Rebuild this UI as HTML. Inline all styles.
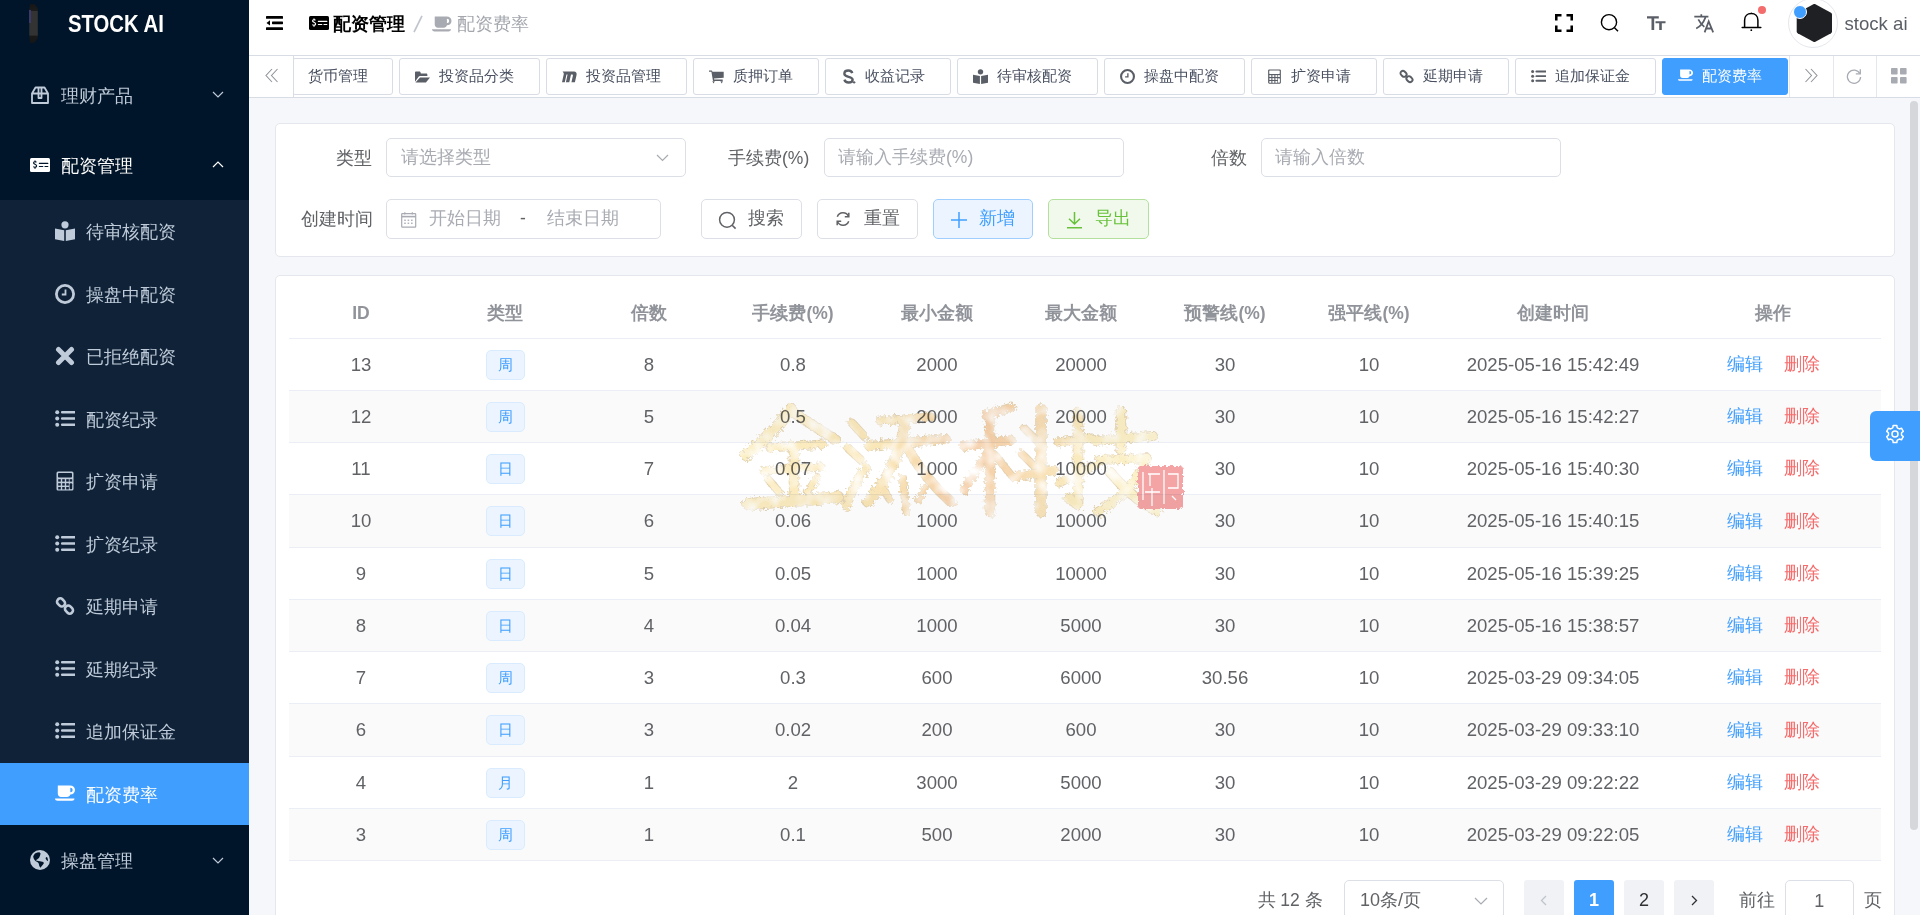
<!DOCTYPE html>
<html><head><meta charset="utf-8">
<style>
*{box-sizing:border-box;margin:0;padding:0}
html,body{width:1920px;height:915px;overflow:hidden}
body{position:relative;font-family:"Liberation Sans",sans-serif;background:#f5f7fa;color:#606266}
.a{position:absolute}
svg{display:block}
#side{left:0;top:0;width:249px;height:915px;background:#001529;overflow:hidden}
.logo-t{left:67.5px;top:8.5px;font-size:23.6px;transform-origin:0 50%;transform:scaleX(0.86);font-weight:bold;color:#fff;line-height:30px;white-space:nowrap}
.mi{left:0;width:249px;height:70px;line-height:70px;font-size:17.5px;color:#bfcbd9}
.mi .tx{position:absolute;left:61px;top:1px}
.sub{left:0;top:200px;width:249px;height:625px;background:#0f2238}
.si{left:0;width:249px;height:62.5px;line-height:62.5px;font-size:17.5px;color:#bfcbd9}
.si .tx{position:absolute;left:86px;top:1px}
.si svg{left:55px;top:21px}
.si.act{background:#409eff;color:#fff}
#hdr{left:249px;top:0;width:1671px;height:55px;background:#fff}
#tabs{left:249px;top:55px;width:1671px;height:43px;background:#fff;border-top:1px solid #d8dce5;border-bottom:1px solid #d8dce5}
.tab{top:58px;height:36.5px;border:1px solid #d8dce5;border-radius:3px;background:#fff;font-size:15px;line-height:34.5px;color:#495060;white-space:nowrap}
.tab .tx{position:absolute;top:0}
.tab svg{top:10px}
.tab.act{background:#409eff;border-color:#409eff;color:#fff}
.card{background:#fff;border:1px solid #e4e7ed;border-radius:5px}
.lbl{font-size:17.5px;color:#606266;line-height:40px;height:40px;white-space:nowrap}
.inp{height:39.5px;border:1px solid #dcdfe6;border-radius:5px;background:#fff;font-size:17.5px;line-height:37.5px;color:#a8abb2;white-space:nowrap}
.btn{height:39.5px;border:1px solid #dcdfe6;border-radius:5px;background:#fff;font-size:17.5px;line-height:37.5px;color:#606266;white-space:nowrap}
.th{position:absolute;top:288px;height:50px;font-size:17.5px;font-weight:bold;color:#909399;text-align:center;line-height:50px;white-space:nowrap}
.row{position:absolute;left:289px;width:1592px}
.row.str{background:#fafafa}
.c{position:absolute;top:0;text-align:center;font-size:18.6px;color:#606266;white-space:nowrap}
.tag{position:absolute;width:39px;height:30px;background:#ecf5ff;border:1px solid #d9ecff;border-radius:5px;color:#409eff;font-size:15px;line-height:27px;text-align:center}
.lk{position:absolute;font-size:17.5px;white-space:nowrap}
.pg{position:absolute;top:880px;width:40px;height:40px;background:#f0f2f5;border-radius:3px;text-align:center;line-height:40px;font-size:18px;color:#303133}
</style></head><body>
<div id="side" class="a">
<div class="a" style="left:29.3px;top:3.8px;width:8.5px;height:39px;background:linear-gradient(#161616 0,#1c1c1c 18%,#333334 19%,#333334 80%,#1a1a1a 82%,#161616 100%);clip-path:polygon(10% 0,60% 0,100% 12%,100% 88%,60% 100%,10% 100%,0 80%,0 15%)"></div><div class="a" style="left:29.3px;top:10px;width:1.5px;height:13px;background:#3a3a6a"></div>
<div class="a logo-t">STOCK AI</div>
<div class="a mi" style="top:60px"><span class="tx">理财产品</span></div>
<div class="a mi" style="top:130px;color:#fff"><span class="tx">配资管理</span></div>
<div class="a sub"></div>
<div class="a si" style="top:200.0px"><svg class="a" style="left:55px;top:21px" width="20" height="20" viewBox="0 0 20 20"><circle cx="10" cy="3.8" r="3.6" fill="#c0cbd9"/><path d="M0 7.6 L9.2 9.2 V20 L0 18.2 Z M20 7.6 L10.8 9.2 V20 L20 18.2 Z" fill="#c0cbd9"/></svg><span class="tx">待审核配资</span></div>
<div class="a si" style="top:262.5px"><svg class="a" style="left:55px;top:21px" width="20" height="20" viewBox="0 0 20 20"><circle cx="10" cy="10" r="8.6" stroke="#c0cbd9" stroke-width="2.8" fill="none"/><path d="M10.5 5.5 V10.5 H6.8" stroke="#c0cbd9" stroke-width="1.8" fill="none"/></svg><span class="tx">操盘中配资</span></div>
<div class="a si" style="top:325.0px"><svg class="a" style="left:55px;top:21px" width="20" height="20" viewBox="0 0 20 20"><path d="M3.5 3.5 L16.5 16.5 M16.5 3.5 L3.5 16.5" stroke="#c0cbd9" stroke-width="5" stroke-linecap="round"/></svg><span class="tx">已拒绝配资</span></div>
<div class="a si" style="top:387.5px"><svg class="a" style="left:55px;top:21px" width="20" height="20" viewBox="0 0 20 20"><circle cx="2.2" cy="3.3" r="2" fill="#c0cbd9"/><circle cx="2.2" cy="9.5" r="2" fill="#c0cbd9"/><circle cx="2.2" cy="15.7" r="2" fill="#c0cbd9"/><path d="M7.2 3.3 H19.8 M7.2 9.5 H19.8 M7.2 15.7 H19.8" stroke="#c0cbd9" stroke-width="2.6" stroke-linecap="round"/></svg><span class="tx">配资纪录</span></div>
<div class="a si" style="top:450.0px"><svg class="a" style="left:55px;top:21px" width="20" height="20" viewBox="0 0 20 20"><rect x="1.5" y="0.5" width="17" height="19" rx="1.5" fill="#c0cbd9"/><rect x="3" y="2" width="14" height="4.5" rx="0.8" fill="#0f2238"/><g fill="#0f2238"><rect x="3.2" y="8.2" width="2.6" height="2.4"/><rect x="7.2" y="8.2" width="2.6" height="2.4"/><rect x="11.2" y="8.2" width="2.6" height="2.4"/><rect x="14.6" y="8.2" width="2.6" height="2.4"/><rect x="3.2" y="12.2" width="2.6" height="2.4"/><rect x="7.2" y="12.2" width="2.6" height="2.4"/><rect x="11.2" y="12.2" width="2.6" height="2.4"/><rect x="14.6" y="12.2" width="2.6" height="6" rx="1"/><rect x="3.2" y="16" width="2.6" height="2.4"/><rect x="7.2" y="16" width="2.6" height="2.4"/><rect x="11.2" y="16" width="2.6" height="2.4"/></g></svg><span class="tx">扩资申请</span></div>
<div class="a si" style="top:512.5px"><svg class="a" style="left:55px;top:21px" width="20" height="20" viewBox="0 0 20 20"><circle cx="2.2" cy="3.3" r="2" fill="#c0cbd9"/><circle cx="2.2" cy="9.5" r="2" fill="#c0cbd9"/><circle cx="2.2" cy="15.7" r="2" fill="#c0cbd9"/><path d="M7.2 3.3 H19.8 M7.2 9.5 H19.8 M7.2 15.7 H19.8" stroke="#c0cbd9" stroke-width="2.6" stroke-linecap="round"/></svg><span class="tx">扩资纪录</span></div>
<div class="a si" style="top:575.0px"><svg class="a" style="left:55px;top:21px" width="20" height="20" viewBox="0 0 20 20"><g stroke="#c0cbd9" stroke-width="2.6" fill="none"><rect x="1.8" y="3.2" width="8.5" height="6.4" rx="3" transform="rotate(45 6 6.4)"/><rect x="9.7" y="10.4" width="8.5" height="6.4" rx="3" transform="rotate(45 14 13.6)"/></g></svg><span class="tx">延期申请</span></div>
<div class="a si" style="top:637.5px"><svg class="a" style="left:55px;top:21px" width="20" height="20" viewBox="0 0 20 20"><circle cx="2.2" cy="3.3" r="2" fill="#c0cbd9"/><circle cx="2.2" cy="9.5" r="2" fill="#c0cbd9"/><circle cx="2.2" cy="15.7" r="2" fill="#c0cbd9"/><path d="M7.2 3.3 H19.8 M7.2 9.5 H19.8 M7.2 15.7 H19.8" stroke="#c0cbd9" stroke-width="2.6" stroke-linecap="round"/></svg><span class="tx">延期纪录</span></div>
<div class="a si" style="top:700.0px"><svg class="a" style="left:55px;top:21px" width="20" height="20" viewBox="0 0 20 20"><circle cx="2.2" cy="3.3" r="2" fill="#c0cbd9"/><circle cx="2.2" cy="9.5" r="2" fill="#c0cbd9"/><circle cx="2.2" cy="15.7" r="2" fill="#c0cbd9"/><path d="M7.2 3.3 H19.8 M7.2 9.5 H19.8 M7.2 15.7 H19.8" stroke="#c0cbd9" stroke-width="2.6" stroke-linecap="round"/></svg><span class="tx">追加保证金</span></div>
<div class="a si act" style="top:762.5px"><svg class="a" style="left:55px;top:22.5px" width="20" height="20" viewBox="0 0 20 20"><path d="M2.8 0.6 H15 C18 0.6 20 2.5 20 5 C20 7.7 18 9.5 15.3 9.5 C15 11 13.6 12 12 12 H6 C4.2 12 2.8 10.6 2.8 8.8 Z M15.3 2.8 V7.3 C16.7 7.3 17.6 6.3 17.6 5 C17.6 3.7 16.7 2.8 15.3 2.8 Z" fill="#fff" fill-rule="evenodd"/><path d="M0 13.5 H19.5 C19.5 14.8 18.3 15.8 17 15.8 H2.5 C1.2 15.8 0 14.8 0 13.5 Z" fill="#fff"/></svg><span class="tx">配资费率</span></div>
<div class="a mi" style="top:825px"><span class="tx">操盘管理</span></div>
<svg class="a" style="left:31px;top:86px" width="18" height="18" viewBox="0 0 18 18" fill="none" stroke="#c0cbd9" stroke-width="1.8" stroke-linejoin="round"><path d="M1 7.5 L4.5 1.5 H13.5 L17 7.5 V17 H1 Z M1 7.5 H17 M7.5 1.5 V12 H10.5 V1.5"/></svg>
<svg class="a" style="left:30px;top:158px" width="20" height="14" viewBox="0 0 20 14"><rect x="0" y="0" width="20" height="14" rx="1.5" fill="#fff"/><path d="M6.4 4.3 C5.6 3.4 3.6 3.5 3.6 4.9 C3.6 6.4 6.6 6.1 6.6 7.9 C6.6 9.4 4.4 9.6 3.3 8.6 M5 2.6 V3.6 M5 9.6 V10.8" stroke="#001529" stroke-width="1.2" fill="none"/><path d="M9.4 5.4 H17.8 M9.4 8.5 H12.8 M15 8.5 H17.8" stroke="#001529" stroke-width="1.2" stroke-linecap="round"/></svg>
<svg class="a" style="left:212px;top:91px" width="12" height="7" viewBox="0 0 12 7"><path d="M1 1 L6 6 L11 1" stroke="#c0cbd9" stroke-width="1.2" fill="none"/></svg>
<svg class="a" style="left:212px;top:161px" width="12" height="7" viewBox="0 0 12 7"><path d="M1 6 L6 1 L11 6" stroke="#fff" stroke-width="1.2" fill="none"/></svg>
<svg class="a" style="left:212px;top:857px" width="12" height="7" viewBox="0 0 12 7"><path d="M1 1 L6 6 L11 1" stroke="#c0cbd9" stroke-width="1.2" fill="none"/></svg>
<svg class="a" style="left:30px;top:850px" width="20" height="20" viewBox="0 0 20 20"><circle cx="10" cy="10" r="10" fill="#c0cbd9"/><path d="M3.2 6.5 C3.8 5 4.5 4 5 3.5 C6.5 2.6 8 2.2 9.4 2.2 L10.6 3.6 L10 5.8 L9 8.1 C8.2 8.8 7.6 9.2 7.1 9.4 C6.3 9.6 5.9 10 6.2 10.6 C7.5 11 9 11.2 10 11.3 L13.4 12 L13.8 13.4 L11.6 16.3 L10.4 17.8 L9.3 16 L8.7 13.4 C8 12.2 6.5 11.5 5.5 11 C4.2 9.8 3.4 8.2 3.2 6.5 Z M16 7 L17.4 7.4 L18.1 10.5 L17.3 10.9 L15.6 8.8 Z" fill="#001529"/></svg>
</div>
<div id="hdr" class="a"></div>
<div id="tabs" class="a"></div>
<svg class="a" style="left:266px;top:16px" width="17" height="14" viewBox="0 0 17 14"><rect x="0" y="0" width="17" height="2.8" rx="0.6" fill="#000"/><rect x="6" y="5.6" width="11" height="2.6" rx="0.6" fill="#000"/><path d="M0.5 6.9 L4 4.3 V9.5 Z" fill="#000"/><rect x="0" y="11.2" width="17" height="2.8" rx="0.6" fill="#000"/></svg>
<svg class="a" style="left:309px;top:16px" width="20" height="14" viewBox="0 0 20 14"><rect x="0" y="0" width="20" height="14" rx="1.5" fill="#000"/><path d="M6.4 4.3 C5.6 3.4 3.6 3.5 3.6 4.9 C3.6 6.4 6.6 6.1 6.6 7.9 C6.6 9.4 4.4 9.6 3.3 8.6 M5 2.6 V3.6 M5 9.6 V10.8" stroke="#fff" stroke-width="1.2" fill="none"/><path d="M9.4 5.4 H17.8 M9.4 8.5 H12.8 M15 8.5 H17.8" stroke="#fff" stroke-width="1.2" stroke-linecap="round"/></svg>
<div class="a" style="left:332.5px;top:9px;font-size:17.5px;line-height:30px;font-weight:bold;color:#000;white-space:nowrap">配资管理</div>
<svg class="a" style="left:412px;top:15px" width="12" height="18" viewBox="0 0 12 18"><path d="M2 17.2 L10 0.8" stroke="#c0c4cc" stroke-width="1.7"/></svg>
<svg class="a" style="left:432px;top:15.5px" width="19.5" height="19.5" viewBox="0 0 20 20"><path d="M2.8 0.6 H15 C18 0.6 20 2.5 20 5 C20 7.7 18 9.5 15.3 9.5 C15 11 13.6 12 12 12 H6 C4.2 12 2.8 10.6 2.8 8.8 Z M15.3 2.8 V7.3 C16.7 7.3 17.6 6.3 17.6 5 C17.6 3.7 16.7 2.8 15.3 2.8 Z" fill="#a8abb2" fill-rule="evenodd"/><path d="M0 13.5 H19.5 C19.5 14.8 18.3 15.8 17 15.8 H2.5 C1.2 15.8 0 14.8 0 13.5 Z" fill="#a8abb2"/></svg>
<div class="a" style="left:456.5px;top:9px;font-size:17.5px;line-height:30px;color:#a3a6ad;white-space:nowrap">配资费率</div>
<svg class="a" style="left:1555px;top:14px" width="18" height="18" viewBox="0 0 18 18"><path d="M1.25 6.5 V1.25 H6.5 M11.5 1.25 H16.75 V6.5 M16.75 11.5 V16.75 H11.5 M6.5 16.75 H1.25 V11.5" stroke="#000" stroke-width="2.6" fill="none"/></svg>
<svg class="a" style="left:1600px;top:13px" width="20" height="20" viewBox="0 0 20 20"><circle cx="9" cy="9.2" r="7.6" stroke="#000" stroke-width="1.4" fill="none"/><path d="M14.5 14.8 L18 18.2" stroke="#000" stroke-width="1.5"/></svg>
<svg class="a" style="left:1647px;top:15px" width="19" height="16" viewBox="0 0 19 16"><path d="M0 1.2 H11.8 V3.4 H7.2 V15 H4.5 V3.4 H0 Z M8.5 6.2 H18.5 V8.2 H14.8 V15 H12.2 V8.2 H8.5 Z" fill="#5a5e66"/></svg>
<svg class="a" style="left:1694px;top:14px" width="20" height="19" viewBox="0 0 20 19"><path d="M0.3 2.7 H14.4 M7.3 0.3 V2.7 M11.5 3.4 C9.5 8.5 6.5 12.5 2.2 14.5 M4.3 5.3 C6 8.6 8 11 10.3 12.8" stroke="#5a5e66" stroke-width="1.7" fill="none"/><path d="M10.6 18.4 L14.7 7.4 L19.2 18.4 M12.1 14.5 H17.6" stroke="#5a5e66" stroke-width="1.8" fill="none" stroke-linejoin="miter"/></svg>
<svg class="a" style="left:1741px;top:11px" width="21" height="21" viewBox="0 0 21 21"><path d="M3.6 16.6 V9.2 C3.6 5.2 6.5 2.6 10.3 2.6 C14.1 2.6 16.9 5.2 16.9 9.2 V16.6" stroke="#000" stroke-width="1.5" fill="none"/><path d="M1.2 16.6 H19.8" stroke="#000" stroke-width="1.5" stroke-linecap="round"/><path d="M9.3 2.6 L10.3 1.4 L11.3 2.6 Z" fill="#000"/><circle cx="10.3" cy="19.2" r="0.9" fill="#000"/></svg>
<div class="a" style="left:1758px;top:6px;width:8px;height:8px;border-radius:50%;background:#f56c6c"></div>
<div class="a" style="left:1788px;top:-2.5px;width:50px;height:50px;border-radius:50%;border:1px solid #e4e7ed;background:#fff"></div>
<svg class="a" style="left:1796px;top:3px" width="37" height="40" viewBox="0 0 37 40"><path d="M17.4 1.3 C18 1 18.8 1 19.4 1.3 L35 9.8 C35.7 10.2 36 10.8 36 11.6 V28.4 C36 29.2 35.7 29.8 35 30.2 L19.4 38.7 C18.8 39 18 39 17.4 38.7 L1.7 30.2 C1 29.8 0.7 29.2 0.7 28.4 V11.6 C0.7 10.8 1 10.2 1.7 9.8 Z" fill="#1f2023"/></svg>
<div class="a" style="left:1793px;top:5px;width:14px;height:14px;border-radius:50%;background:#409eff;border:1.5px solid #fff"></div>
<div class="a" style="left:1844.5px;top:8.5px;font-size:18.6px;line-height:30px;color:#5a5e66;white-space:nowrap">stock ai</div>
<div class="a" style="left:292.5px;top:56px;width:1px;height:41px;background:#d8dce5"></div>
<svg class="a" style="left:265px;top:68px" width="14" height="15" viewBox="0 0 14 15"><path d="M7 1 L1 7.5 L7 14 M12.5 1 L6.5 7.5 L12.5 14" stroke="#909399" stroke-width="1.1" fill="none"/></svg>
<div class="a" style="left:293.5px;top:56px;width:1496px;height:41px;overflow:hidden">
<div class="a tab" style="left:-1.50px;top:2px;width:101.20px"><span class="tx" style="left:15px">货币管理</span></div>
<div class="a tab" style="left:105.20px;top:2px;width:141.50px"><svg class="a" style="left:15px;top:9.5px" width="15" height="15" viewBox="0 0 20 20"><path d="M0 4.6 C0 3.8 .6 3.2 1.4 3.2 H6 C6.9 3.2 7.4 3.8 7.8 5.9 H15 C15.9 5.9 16.5 6.6 16.5 7.5 V9.4 H6.8 C5.8 9.4 5 9.9 4.5 10.7 L0 17 Z M6.7 11.4 H20 L14.6 17.9 H0.6 Z" fill="#5a5e66"/></svg><span class="tx" style="left:39.7px">投资品分类</span></div>
<div class="a tab" style="left:252.20px;top:2px;width:141.50px"><svg class="a" style="left:15px;top:9.5px" width="15" height="15" viewBox="0 0 20 20"><path d="M0.8 3.3 H16 C18.6 3.3 20 5.2 19.4 8 L17.2 17.6 H12.6 L14.5 9 C14.7 8 14.3 7.4 13.4 7.4 H12 L9.7 17.6 H5.2 L7.4 7.4 H6 L3.7 17.6 H0 L2.4 6.5 C2.5 5.6 1.8 4.6 0.8 3.3 Z" fill="#5a5e66"/></svg><span class="tx" style="left:39.7px">投资品管理</span></div>
<div class="a tab" style="left:399.20px;top:2px;width:126.50px"><svg class="a" style="left:15px;top:9.5px" width="15" height="15" viewBox="0 0 20 20"><path d="M0 2 H3 C3.8 2 4.4 2.5 4.6 3.6 H19.6 V11.6 L6.6 12.8 L6.9 14.1 H18.3 V16.1 H6.2 C5.4 16.1 5.2 15.5 5.1 14.8 L3.2 3.6 H0 Z" fill="#5a5e66"/><path d="M4.4 16.2 H7.8 L6.1 19.4 Z M15.2 16.2 H18.6 L16.9 19.4 Z" fill="#5a5e66"/></svg><span class="tx" style="left:39.7px">质押订单</span></div>
<div class="a tab" style="left:531.20px;top:2px;width:126.50px"><svg class="a" style="left:15px;top:9.5px" width="15" height="15" viewBox="0 0 20 20"><path d="M15 5.5 C14.5 3.2 12.5 2 9.8 2 C6.5 2 4.5 3.8 4.5 6.2 C4.5 11.5 15.5 9.5 15.5 14.2 C15.5 16.5 13.3 18 10.2 18 C7 18 5.2 16.6 4.6 14.2" stroke="#5a5e66" stroke-width="3.2" fill="none"/><path d="M10 0 V20" stroke="#5a5e66" stroke-width="0" /><circle cx="17.5" cy="17.8" r="1.6" fill="#5a5e66"/></svg><span class="tx" style="left:39.7px">收益记录</span></div>
<div class="a tab" style="left:663.20px;top:2px;width:141.50px"><svg class="a" style="left:15px;top:9.5px" width="15" height="15" viewBox="0 0 20 20"><circle cx="10" cy="3.8" r="3.6" fill="#5a5e66"/><path d="M0 7.6 L9.2 9.2 V20 L0 18.2 Z M20 7.6 L10.8 9.2 V20 L20 18.2 Z" fill="#5a5e66"/></svg><span class="tx" style="left:39.7px">待审核配资</span></div>
<div class="a tab" style="left:810.20px;top:2px;width:141.50px"><svg class="a" style="left:15px;top:9.5px" width="15" height="15" viewBox="0 0 20 20"><circle cx="10" cy="10" r="8.6" stroke="#5a5e66" stroke-width="2.8" fill="none"/><path d="M10.5 5.5 V10.5 H6.8" stroke="#5a5e66" stroke-width="1.8" fill="none"/></svg><span class="tx" style="left:39.7px">操盘中配资</span></div>
<div class="a tab" style="left:957.20px;top:2px;width:126.50px"><svg class="a" style="left:15px;top:9.5px" width="15" height="15" viewBox="0 0 20 20"><rect x="1.5" y="0.5" width="17" height="19" rx="1.5" fill="#5a5e66"/><rect x="3" y="2" width="14" height="4.5" rx="0.8" fill="#fff"/><g fill="#fff"><rect x="3.2" y="8.2" width="2.6" height="2.4"/><rect x="7.2" y="8.2" width="2.6" height="2.4"/><rect x="11.2" y="8.2" width="2.6" height="2.4"/><rect x="14.6" y="8.2" width="2.6" height="2.4"/><rect x="3.2" y="12.2" width="2.6" height="2.4"/><rect x="7.2" y="12.2" width="2.6" height="2.4"/><rect x="11.2" y="12.2" width="2.6" height="2.4"/><rect x="14.6" y="12.2" width="2.6" height="6" rx="1"/><rect x="3.2" y="16" width="2.6" height="2.4"/><rect x="7.2" y="16" width="2.6" height="2.4"/><rect x="11.2" y="16" width="2.6" height="2.4"/></g></svg><span class="tx" style="left:39.7px">扩资申请</span></div>
<div class="a tab" style="left:1089.20px;top:2px;width:126.50px"><svg class="a" style="left:15px;top:9.5px" width="15" height="15" viewBox="0 0 20 20"><g stroke="#5a5e66" stroke-width="2.6" fill="none"><rect x="1.8" y="3.2" width="8.5" height="6.4" rx="3" transform="rotate(45 6 6.4)"/><rect x="9.7" y="10.4" width="8.5" height="6.4" rx="3" transform="rotate(45 14 13.6)"/></g></svg><span class="tx" style="left:39.7px">延期申请</span></div>
<div class="a tab" style="left:1221.20px;top:2px;width:141.50px"><svg class="a" style="left:15px;top:9.5px" width="15" height="15" viewBox="0 0 20 20"><circle cx="2.2" cy="3.3" r="2" fill="#5a5e66"/><circle cx="2.2" cy="9.5" r="2" fill="#5a5e66"/><circle cx="2.2" cy="15.7" r="2" fill="#5a5e66"/><path d="M7.2 3.3 H19.8 M7.2 9.5 H19.8 M7.2 15.7 H19.8" stroke="#5a5e66" stroke-width="2.6" stroke-linecap="round"/></svg><span class="tx" style="left:39.7px">追加保证金</span></div>
<div class="a tab act" style="left:1368.20px;top:2px;width:126.50px"><svg class="a" style="left:15px;top:9.5px" width="15" height="15" viewBox="0 0 20 20"><path d="M2.8 0.6 H15 C18 0.6 20 2.5 20 5 C20 7.7 18 9.5 15.3 9.5 C15 11 13.6 12 12 12 H6 C4.2 12 2.8 10.6 2.8 8.8 Z M15.3 2.8 V7.3 C16.7 7.3 17.6 6.3 17.6 5 C17.6 3.7 16.7 2.8 15.3 2.8 Z" fill="#fff" fill-rule="evenodd"/><path d="M0 13.5 H19.5 C19.5 14.8 18.3 15.8 17 15.8 H2.5 C1.2 15.8 0 14.8 0 13.5 Z" fill="#fff"/></svg><span class="tx" style="left:39.7px">配资费率</span></div>
</div>
<div class="a" style="left:1789px;top:56px;width:1px;height:41px;background:#e4e7ed"></div>
<div class="a" style="left:1833px;top:56px;width:1px;height:41px;background:#e4e7ed"></div>
<div class="a" style="left:1876px;top:56px;width:1px;height:41px;background:#e4e7ed"></div>
<svg class="a" style="left:1804px;top:68px" width="14" height="15" viewBox="0 0 14 15"><path d="M1.5 1 L7.5 7.5 L1.5 14 M7 1 L13 7.5 L7 14" stroke="#909399" stroke-width="1.1" fill="none"/></svg>
<svg class="a" style="left:1846px;top:68px" width="16" height="16" viewBox="0 0 16 16"><path d="M13.8 5.5 A6.6 6.6 0 1 0 14.6 9" stroke="#a8abb2" stroke-width="1.3" fill="none"/><path d="M14.3 1.2 V5.8 H9.8" stroke="#a8abb2" stroke-width="1.3" fill="none"/></svg>
<svg class="a" style="left:1890.5px;top:67.8px" width="16" height="16" viewBox="0 0 16 16"><g fill="#a8abb2"><rect x="0" y="0" width="6.6" height="6.6" rx="0.8"/><rect x="9" y="0" width="6.6" height="6.6" rx="0.8"/><rect x="0" y="9" width="6.6" height="6.6" rx="0.8"/><rect x="9" y="9" width="6.6" height="6.6" rx="0.8"/></g></svg>
<div class="a card" style="left:275px;top:123px;width:1620px;height:134px"></div>
<div class="a card" style="left:275px;top:275px;width:1620px;height:700px"></div>
<div class="th" style="left:289px;width:144px">ID</div>
<div class="th" style="left:433px;width:144px">类型</div>
<div class="th" style="left:577px;width:144px">倍数</div>
<div class="th" style="left:721px;width:144px">手续费(%)</div>
<div class="th" style="left:865px;width:144px">最小金额</div>
<div class="th" style="left:1009px;width:144px">最大金额</div>
<div class="th" style="left:1153px;width:144px">预警线(%)</div>
<div class="th" style="left:1297px;width:144px">强平线(%)</div>
<div class="th" style="left:1441px;width:224px">创建时间</div>
<div class="th" style="left:1665px;width:216px">操作</div>
<div class="row" style="top:339px;height:51px">
<div class="c" style="left:0px;width:144px;line-height:51px">13</div>
<div class="tag" style="left:197px;top:10.8px;line-height:28px">周</div>
<div class="c" style="left:288px;width:144px;line-height:51px">8</div>
<div class="c" style="left:432px;width:144px;line-height:51px">0.8</div>
<div class="c" style="left:576px;width:144px;line-height:51px">2000</div>
<div class="c" style="left:720px;width:144px;line-height:51px">20000</div>
<div class="c" style="left:864px;width:144px;line-height:51px">30</div>
<div class="c" style="left:1008px;width:144px;line-height:51px">10</div>
<div class="c" style="left:1152px;width:224px;line-height:51px">2025-05-16 15:42:49</div>
<div class="lk" style="left:1437.5px;top:0;line-height:51px;color:#409eff">编辑</div>
<div class="lk" style="left:1494.5px;top:0;line-height:51px;color:#f56c6c">删除</div>
</div>
<div class="row str" style="top:391px;height:51px">
<div class="c" style="left:0px;width:144px;line-height:51px">12</div>
<div class="tag" style="left:197px;top:10.8px;line-height:28px">周</div>
<div class="c" style="left:288px;width:144px;line-height:51px">5</div>
<div class="c" style="left:432px;width:144px;line-height:51px">0.5</div>
<div class="c" style="left:576px;width:144px;line-height:51px">2000</div>
<div class="c" style="left:720px;width:144px;line-height:51px">20000</div>
<div class="c" style="left:864px;width:144px;line-height:51px">30</div>
<div class="c" style="left:1008px;width:144px;line-height:51px">10</div>
<div class="c" style="left:1152px;width:224px;line-height:51px">2025-05-16 15:42:27</div>
<div class="lk" style="left:1437.5px;top:0;line-height:51px;color:#409eff">编辑</div>
<div class="lk" style="left:1494.5px;top:0;line-height:51px;color:#f56c6c">删除</div>
</div>
<div class="row" style="top:443px;height:51px">
<div class="c" style="left:0px;width:144px;line-height:51px">11</div>
<div class="tag" style="left:197px;top:10.8px;line-height:28px">日</div>
<div class="c" style="left:288px;width:144px;line-height:51px">7</div>
<div class="c" style="left:432px;width:144px;line-height:51px">0.07</div>
<div class="c" style="left:576px;width:144px;line-height:51px">1000</div>
<div class="c" style="left:720px;width:144px;line-height:51px">10000</div>
<div class="c" style="left:864px;width:144px;line-height:51px">30</div>
<div class="c" style="left:1008px;width:144px;line-height:51px">10</div>
<div class="c" style="left:1152px;width:224px;line-height:51px">2025-05-16 15:40:30</div>
<div class="lk" style="left:1437.5px;top:0;line-height:51px;color:#409eff">编辑</div>
<div class="lk" style="left:1494.5px;top:0;line-height:51px;color:#f56c6c">删除</div>
</div>
<div class="row str" style="top:495px;height:52px">
<div class="c" style="left:0px;width:144px;line-height:52px">10</div>
<div class="tag" style="left:197px;top:11.3px;line-height:28px">日</div>
<div class="c" style="left:288px;width:144px;line-height:52px">6</div>
<div class="c" style="left:432px;width:144px;line-height:52px">0.06</div>
<div class="c" style="left:576px;width:144px;line-height:52px">1000</div>
<div class="c" style="left:720px;width:144px;line-height:52px">10000</div>
<div class="c" style="left:864px;width:144px;line-height:52px">30</div>
<div class="c" style="left:1008px;width:144px;line-height:52px">10</div>
<div class="c" style="left:1152px;width:224px;line-height:52px">2025-05-16 15:40:15</div>
<div class="lk" style="left:1437.5px;top:0;line-height:52px;color:#409eff">编辑</div>
<div class="lk" style="left:1494.5px;top:0;line-height:52px;color:#f56c6c">删除</div>
</div>
<div class="row" style="top:548px;height:51px">
<div class="c" style="left:0px;width:144px;line-height:51px">9</div>
<div class="tag" style="left:197px;top:10.8px;line-height:28px">日</div>
<div class="c" style="left:288px;width:144px;line-height:51px">5</div>
<div class="c" style="left:432px;width:144px;line-height:51px">0.05</div>
<div class="c" style="left:576px;width:144px;line-height:51px">1000</div>
<div class="c" style="left:720px;width:144px;line-height:51px">10000</div>
<div class="c" style="left:864px;width:144px;line-height:51px">30</div>
<div class="c" style="left:1008px;width:144px;line-height:51px">10</div>
<div class="c" style="left:1152px;width:224px;line-height:51px">2025-05-16 15:39:25</div>
<div class="lk" style="left:1437.5px;top:0;line-height:51px;color:#409eff">编辑</div>
<div class="lk" style="left:1494.5px;top:0;line-height:51px;color:#f56c6c">删除</div>
</div>
<div class="row str" style="top:600px;height:51px">
<div class="c" style="left:0px;width:144px;line-height:51px">8</div>
<div class="tag" style="left:197px;top:10.8px;line-height:28px">日</div>
<div class="c" style="left:288px;width:144px;line-height:51px">4</div>
<div class="c" style="left:432px;width:144px;line-height:51px">0.04</div>
<div class="c" style="left:576px;width:144px;line-height:51px">1000</div>
<div class="c" style="left:720px;width:144px;line-height:51px">5000</div>
<div class="c" style="left:864px;width:144px;line-height:51px">30</div>
<div class="c" style="left:1008px;width:144px;line-height:51px">10</div>
<div class="c" style="left:1152px;width:224px;line-height:51px">2025-05-16 15:38:57</div>
<div class="lk" style="left:1437.5px;top:0;line-height:51px;color:#409eff">编辑</div>
<div class="lk" style="left:1494.5px;top:0;line-height:51px;color:#f56c6c">删除</div>
</div>
<div class="row" style="top:652px;height:51px">
<div class="c" style="left:0px;width:144px;line-height:51px">7</div>
<div class="tag" style="left:197px;top:10.8px;line-height:28px">周</div>
<div class="c" style="left:288px;width:144px;line-height:51px">3</div>
<div class="c" style="left:432px;width:144px;line-height:51px">0.3</div>
<div class="c" style="left:576px;width:144px;line-height:51px">600</div>
<div class="c" style="left:720px;width:144px;line-height:51px">6000</div>
<div class="c" style="left:864px;width:144px;line-height:51px">30.56</div>
<div class="c" style="left:1008px;width:144px;line-height:51px">10</div>
<div class="c" style="left:1152px;width:224px;line-height:51px">2025-03-29 09:34:05</div>
<div class="lk" style="left:1437.5px;top:0;line-height:51px;color:#409eff">编辑</div>
<div class="lk" style="left:1494.5px;top:0;line-height:51px;color:#f56c6c">删除</div>
</div>
<div class="row str" style="top:704px;height:52px">
<div class="c" style="left:0px;width:144px;line-height:52px">6</div>
<div class="tag" style="left:197px;top:11.3px;line-height:28px">日</div>
<div class="c" style="left:288px;width:144px;line-height:52px">3</div>
<div class="c" style="left:432px;width:144px;line-height:52px">0.02</div>
<div class="c" style="left:576px;width:144px;line-height:52px">200</div>
<div class="c" style="left:720px;width:144px;line-height:52px">600</div>
<div class="c" style="left:864px;width:144px;line-height:52px">30</div>
<div class="c" style="left:1008px;width:144px;line-height:52px">10</div>
<div class="c" style="left:1152px;width:224px;line-height:52px">2025-03-29 09:33:10</div>
<div class="lk" style="left:1437.5px;top:0;line-height:52px;color:#409eff">编辑</div>
<div class="lk" style="left:1494.5px;top:0;line-height:52px;color:#f56c6c">删除</div>
</div>
<div class="row" style="top:757px;height:51px">
<div class="c" style="left:0px;width:144px;line-height:51px">4</div>
<div class="tag" style="left:197px;top:10.8px;line-height:28px">月</div>
<div class="c" style="left:288px;width:144px;line-height:51px">1</div>
<div class="c" style="left:432px;width:144px;line-height:51px">2</div>
<div class="c" style="left:576px;width:144px;line-height:51px">3000</div>
<div class="c" style="left:720px;width:144px;line-height:51px">5000</div>
<div class="c" style="left:864px;width:144px;line-height:51px">30</div>
<div class="c" style="left:1008px;width:144px;line-height:51px">10</div>
<div class="c" style="left:1152px;width:224px;line-height:51px">2025-03-29 09:22:22</div>
<div class="lk" style="left:1437.5px;top:0;line-height:51px;color:#409eff">编辑</div>
<div class="lk" style="left:1494.5px;top:0;line-height:51px;color:#f56c6c">删除</div>
</div>
<div class="row str" style="top:809px;height:51px">
<div class="c" style="left:0px;width:144px;line-height:51px">3</div>
<div class="tag" style="left:197px;top:10.8px;line-height:28px">周</div>
<div class="c" style="left:288px;width:144px;line-height:51px">1</div>
<div class="c" style="left:432px;width:144px;line-height:51px">0.1</div>
<div class="c" style="left:576px;width:144px;line-height:51px">500</div>
<div class="c" style="left:720px;width:144px;line-height:51px">2000</div>
<div class="c" style="left:864px;width:144px;line-height:51px">30</div>
<div class="c" style="left:1008px;width:144px;line-height:51px">10</div>
<div class="c" style="left:1152px;width:224px;line-height:51px">2025-03-29 09:22:05</div>
<div class="lk" style="left:1437.5px;top:0;line-height:51px;color:#409eff">编辑</div>
<div class="lk" style="left:1494.5px;top:0;line-height:51px;color:#f56c6c">删除</div>
</div>
<div class="a" style="left:289px;top:338px;width:1592px;height:1px;background:#ebeef5"></div>
<div class="a" style="left:289px;top:390px;width:1592px;height:1px;background:#ebeef5"></div>
<div class="a" style="left:289px;top:442px;width:1592px;height:1px;background:#ebeef5"></div>
<div class="a" style="left:289px;top:494px;width:1592px;height:1px;background:#ebeef5"></div>
<div class="a" style="left:289px;top:547px;width:1592px;height:1px;background:#ebeef5"></div>
<div class="a" style="left:289px;top:599px;width:1592px;height:1px;background:#ebeef5"></div>
<div class="a" style="left:289px;top:651px;width:1592px;height:1px;background:#ebeef5"></div>
<div class="a" style="left:289px;top:703px;width:1592px;height:1px;background:#ebeef5"></div>
<div class="a" style="left:289px;top:756px;width:1592px;height:1px;background:#ebeef5"></div>
<div class="a" style="left:289px;top:808px;width:1592px;height:1px;background:#ebeef5"></div>
<div class="a" style="left:289px;top:860px;width:1592px;height:1px;background:#ebeef5"></div>
<div class="a lbl" style="left:336px;top:137.5px">类型</div>
<div class="a inp" style="left:386px;top:137.5px;width:300px"><span class="a" style="left:14px;top:0">请选择类型</span><svg class="a" style="left:269px;top:15px" width="13" height="8" viewBox="0 0 13 8"><path d="M1 1 L6.5 6.5 L12 1" stroke="#a8abb2" stroke-width="1.2" fill="none"/></svg></div>
<div class="a lbl" style="left:728px;top:137.5px">手续费(%)</div>
<div class="a inp" style="left:824px;top:137.5px;width:299.5px"><span class="a" style="left:13px;top:0">请输入手续费(%)</span></div>
<div class="a lbl" style="left:1210.5px;top:137.5px">倍数</div>
<div class="a inp" style="left:1261px;top:137.5px;width:299.5px"><span class="a" style="left:13px;top:0">请输入倍数</span></div>
<div class="a lbl" style="left:301px;top:199px">创建时间</div>
<div class="a inp" style="left:386px;top:199px;width:275px"><svg class="a" style="left:13.5px;top:12px" width="16" height="16" viewBox="0 0 16 16"><rect x="0.7" y="1.6" width="14" height="13.6" rx="0.6" stroke="#a8abb2" stroke-width="1.2" fill="none"/><path d="M0.7 4.6 H14.7" stroke="#a8abb2" stroke-width="1.6"/><path d="M3.8 0.2 V2.6 M11.3 0.2 V2.6" stroke="#a8abb2" stroke-width="1.2"/><g fill="#a8abb2"><rect x="3.2" y="7.6" width="1.6" height="1.3"/><rect x="6.6" y="7.6" width="1.6" height="1.3"/><rect x="10" y="7.6" width="1.6" height="1.3"/><rect x="3.2" y="10.6" width="1.6" height="1.3"/><rect x="6.6" y="10.6" width="1.6" height="1.3"/><rect x="10" y="10.6" width="1.6" height="1.3"/></g></svg><span class="a" style="left:42px;top:0">开始日期</span><span class="a" style="left:133px;top:0;color:#606266">-</span><span class="a" style="left:159.5px;top:0">结束日期</span></div>
<div class="a btn" style="left:701px;top:199px;width:101px"><svg class="a" style="left:16px;top:10.5px" width="19" height="19" viewBox="0 0 19 19"><circle cx="9" cy="8.8" r="7.4" stroke="#606266" stroke-width="1.5" fill="none"/><path d="M14.2 14.2 L17.6 17.6" stroke="#606266" stroke-width="1.6"/></svg><span class="a" style="left:45.5px;top:0">搜索</span></div>
<div class="a btn" style="left:817px;top:199px;width:101px"><svg class="a" style="left:17px;top:11px" width="16" height="16" viewBox="0 0 16 16"><path d="M13.5 5.5 A6 6 0 0 0 2.3 5.8 M2.5 10.5 A6 6 0 0 0 13.7 10.2" stroke="#606266" stroke-width="1.5" fill="none"/><path d="M13.8 1.8 V5.8 H9.8 M2.2 14.2 V10.2 H6.2" stroke="#606266" stroke-width="1.5" fill="none"/></svg><span class="a" style="left:45.5px;top:0">重置</span></div>
<div class="a btn" style="left:933px;top:199px;width:100px;background:#ecf5ff;border-color:#a0cfff;color:#409eff"><svg class="a" style="left:16px;top:10.5px" width="18" height="18" viewBox="0 0 18 18"><path d="M9 1 V17 M1 9 H17" stroke="#409eff" stroke-width="1.5"/></svg><span class="a" style="left:45px;top:0">新增</span></div>
<div class="a btn" style="left:1048px;top:199px;width:101px;background:#f0f9eb;border-color:#b3e19d;color:#67c23a"><svg class="a" style="left:17px;top:10.5px" width="17" height="18" viewBox="0 0 17 18"><path d="M8.5 1 V13 M3 7.8 L8.5 13 L14 7.8 M1 16.8 H16" stroke="#67c23a" stroke-width="1.5" fill="none"/></svg><span class="a" style="left:45.5px;top:0">导出</span></div>
<div class="a" style="left:1257.5px;top:885px;font-size:17.5px;line-height:30px;color:#606266;white-space:nowrap">共 12 条</div>
<div class="a inp" style="left:1344px;top:880px;width:159.5px;height:42px;color:#606266"><span class="a" style="left:15px;top:1px;font-size:18px">10条/页</span><svg class="a" style="left:129px;top:15.5px" width="14" height="8" viewBox="0 0 14 8"><path d="M1 1 L7 7 L13 1" stroke="#a8abb2" stroke-width="1.2" fill="none"/></svg></div>
<div class="pg" style="left:1524px"><svg class="a" style="left:16px;top:15px" width="7" height="11" viewBox="0 0 7 11"><path d="M6 1 L1.5 5.5 L6 10" stroke="#c0c4cc" stroke-width="1.3" fill="none"/></svg></div>
<div class="pg" style="left:1574px;background:#409eff;color:#fff;font-weight:bold">1</div>
<div class="pg" style="left:1624px">2</div>
<div class="pg" style="left:1674px"><svg class="a" style="left:17px;top:15px" width="7" height="11" viewBox="0 0 7 11"><path d="M1 1 L5.5 5.5 L1 10" stroke="#303133" stroke-width="1.3" fill="none"/></svg></div>
<div class="a" style="left:1739px;top:885px;font-size:17.5px;line-height:30px;color:#606266;white-space:nowrap">前往</div>
<div class="a inp" style="left:1784.5px;top:880px;width:69.5px;height:42px;color:#606266;text-align:center"><span style="font-size:18px;line-height:40px">1</span></div>
<div class="a" style="left:1864px;top:885px;font-size:17.5px;line-height:30px;color:#606266">页</div>
<div class="a" style="left:1910px;top:101px;width:8px;height:729px;border-radius:4px;background:#d6d7da"></div>
<div class="a" style="left:1870px;top:411px;width:55px;height:50px;background:#409eff;border-radius:6px 0 0 6px"></div>
<svg class="a" style="left:0;top:0;mix-blend-mode:multiply" width="1920" height="915" viewBox="0 0 1920 915">
<defs><linearGradient id="wg" gradientUnits="userSpaceOnUse" x1="740" y1="400" x2="1160" y2="515"><stop offset="0" stop-color="#fbecb8"/><stop offset="0.35" stop-color="#f8e0a6"/><stop offset="0.55" stop-color="#f2c090"/><stop offset="0.8" stop-color="#f9e8b2"/><stop offset="1" stop-color="#fbf0c0"/></linearGradient>
<filter id="wr" x="-5%" y="-20%" width="110%" height="140%"><feTurbulence type="fractalNoise" baseFrequency="0.3" numOctaves="3" seed="5" result="t1"/><feDisplacementMap in="SourceGraphic" in2="t1" scale="7" result="d"/><feTurbulence type="fractalNoise" baseFrequency="0.06" numOctaves="2" seed="9" result="t2"/><feColorMatrix in="t2" type="matrix" values="0 0 0 0 0  0 0 0 0 0  0 0 0 0 0  0 0 0 2.2 -0.35" result="m"/><feComposite in="d" in2="m" operator="in"/></filter><filter id="ws" x="-10%" y="-10%" width="120%" height="120%"><feTurbulence type="fractalNoise" baseFrequency="0.3" numOctaves="3" seed="5"/><feDisplacementMap in="SourceGraphic" scale="5"/></filter></defs>
<g filter="url(#wr)" fill="none" stroke-linecap="round" stroke-linejoin="round" opacity="0.8">
<g stroke="#d9c49c"><path d="M791 409 C780 425 765 440 746 455" stroke-width="12.2"/><path d="M791 411 C805 420 820 430 836 440" stroke-width="10.6"/><path d="M770 448 L823 444" stroke-width="9.0"/><path d="M794 446 L794 500" stroke-width="10.6"/><path d="M764 471 L821 467" stroke-width="9.0"/><path d="M768 479 L779 492" stroke-width="8.2"/><path d="M817 477 L808 492" stroke-width="8.2"/><path d="M748 504 C780 502 810 500 838 497" stroke-width="12.2"/><path d="M852 423 L864 436" stroke-width="9.0"/><path d="M848 448 L861 460" stroke-width="9.0"/><path d="M846 506 C852 490 858 478 866 468" stroke-width="9.8"/><path d="M880 421 L931 417" stroke-width="9.0"/><path d="M869 446 L946 439" stroke-width="9.8"/><path d="M906 420 C900 455 885 485 868 502" stroke-width="11.4"/><path d="M907 447 C920 470 935 488 951 502" stroke-width="10.6"/><path d="M903 478 L906 512" stroke-width="8.2"/><path d="M884 490 L890 500" stroke-width="7.4"/><path d="M925 488 L918 500" stroke-width="7.4"/><path d="M985 415 L1012 407" stroke-width="9.0"/><path d="M964 446 L1011 440" stroke-width="9.8"/><path d="M990 420 L990 512" stroke-width="10.6"/><path d="M988 452 L964 490" stroke-width="9.0"/><path d="M996 456 L1011 475" stroke-width="8.2"/><path d="M1024 428 L1036 440" stroke-width="8.2"/><path d="M1021 453 L1033 465" stroke-width="8.2"/><path d="M1014 477 L1054 470" stroke-width="9.8"/><path d="M1041 409 L1041 512" stroke-width="11.4"/><path d="M1058 442 L1092 438" stroke-width="9.0"/><path d="M1078 413 L1078 505 L1068 498" stroke-width="10.6"/><path d="M1059 483 L1096 465" stroke-width="9.0"/><path d="M1095 441 L1153 436" stroke-width="9.8"/><path d="M1121 411 L1121 450" stroke-width="10.6"/><path d="M1100 460 L1147 458 C1135 485 1118 500 1098 512" stroke-width="9.8"/><path d="M1110 472 C1125 490 1140 503 1157 511" stroke-width="10.6"/></g>
<g stroke="url(#wg)"><path d="M791 409 C780 425 765 440 746 455" stroke-width="10.4"/><path d="M791 411 C805 420 820 430 836 440" stroke-width="8.8"/><path d="M770 448 L823 444" stroke-width="7.2"/><path d="M794 446 L794 500" stroke-width="8.8"/><path d="M764 471 L821 467" stroke-width="7.2"/><path d="M768 479 L779 492" stroke-width="6.4"/><path d="M817 477 L808 492" stroke-width="6.4"/><path d="M748 504 C780 502 810 500 838 497" stroke-width="10.4"/><path d="M852 423 L864 436" stroke-width="7.2"/><path d="M848 448 L861 460" stroke-width="7.2"/><path d="M846 506 C852 490 858 478 866 468" stroke-width="8.0"/><path d="M880 421 L931 417" stroke-width="7.2"/><path d="M869 446 L946 439" stroke-width="8.0"/><path d="M906 420 C900 455 885 485 868 502" stroke-width="9.6"/><path d="M907 447 C920 470 935 488 951 502" stroke-width="8.8"/><path d="M903 478 L906 512" stroke-width="6.4"/><path d="M884 490 L890 500" stroke-width="5.6"/><path d="M925 488 L918 500" stroke-width="5.6"/><path d="M985 415 L1012 407" stroke-width="7.2"/><path d="M964 446 L1011 440" stroke-width="8.0"/><path d="M990 420 L990 512" stroke-width="8.8"/><path d="M988 452 L964 490" stroke-width="7.2"/><path d="M996 456 L1011 475" stroke-width="6.4"/><path d="M1024 428 L1036 440" stroke-width="6.4"/><path d="M1021 453 L1033 465" stroke-width="6.4"/><path d="M1014 477 L1054 470" stroke-width="8.0"/><path d="M1041 409 L1041 512" stroke-width="9.6"/><path d="M1058 442 L1092 438" stroke-width="7.2"/><path d="M1078 413 L1078 505 L1068 498" stroke-width="8.8"/><path d="M1059 483 L1096 465" stroke-width="7.2"/><path d="M1095 441 L1153 436" stroke-width="8.0"/><path d="M1121 411 L1121 450" stroke-width="8.8"/><path d="M1100 460 L1147 458 C1135 485 1118 500 1098 512" stroke-width="8.0"/><path d="M1110 472 C1125 490 1140 503 1157 511" stroke-width="8.8"/></g>
</g>
<rect x="1138" y="466" width="45" height="43" rx="3" fill="#f4a4a4" filter="url(#ws)"/>
<g stroke="#fff" stroke-width="1.3" fill="none"><path d="M1143 472 V500 M1148 474 H1160 M1150 474 V486 M1145 492 H1160 M1152 488 V506 M1164 470 V504 M1168 474 H1178 V488 H1168 M1172 496 L1176 500"/></g>
</svg>
<svg class="a" style="left:1883px;top:422px" width="24" height="24" viewBox="0 0 24 24"><path d="M8.75 6.37 L9.82 5.67 L10.19 3.49 L13.81 3.49 L14.18 5.67 L15.25 6.37 L16.40 6.94 L18.47 6.18 L20.27 9.31 L18.58 10.72 L18.50 12.00 L18.58 13.28 L20.27 14.69 L18.47 17.82 L16.40 17.06 L15.25 17.63 L14.18 18.33 L13.81 20.51 L10.19 20.51 L9.82 18.33 L8.75 17.63 L7.60 17.06 L5.53 17.82 L3.73 14.69 L5.42 13.28 L5.50 12.00 L5.42 10.72 L3.73 9.31 L5.53 6.18 L7.60 6.94 Z" stroke="#fff" stroke-width="1.5" fill="none" stroke-linejoin="round"/><circle cx="12" cy="12" r="3" stroke="#fff" stroke-width="1.5" fill="none"/></svg>
</body></html>
